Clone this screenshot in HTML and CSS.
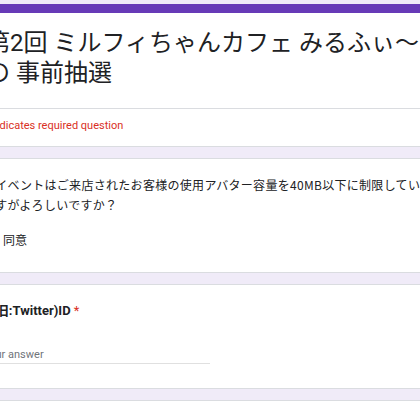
FILE: index.html
```html
<!DOCTYPE html>
<html lang="ja">
<head>
<meta charset="utf-8">
<title>第2回 ミルフィちゃんカフェ みるふぃ～の 事前抽選</title>
<link rel="stylesheet" href="styles.css">
</head>
<body>
<div class="page">
  <div class="form">
    <section class="card header">
      <div class="title-block">
        <h1 class="title">第2回 ミルフィちゃんカフェ みるふぃ～<br>の 事前抽選</h1>
      </div>
      <div class="required">* Indicates required question</div>
    </section>
    <section class="card question">
      <div class="q-text">本イベントはご来店されたお客様の使用アバター容量を40MB以下に制限してい<br>ますがよろしいですか？</div>
      <div class="option"><span class="checkbox"></span><span class="opt-label">同意</span></div>
    </section>
    <section class="card question">
      <div class="q-title">X(旧:Twitter)ID <span class="req">*</span></div>
      <div class="answer">Your answer</div>
    </section>
    <section class="card question empty"></section>
  </div>
</div>
</body>
</html>
```
FILE: styles.css
```css
html, body {
  margin: 0;
  padding: 0;
  overflow: hidden;
  background: #f0ebf8;
}
.page {
  height: 420px;
  padding-top: 4px;
  box-sizing: border-box;
  font-family: Roboto, "Noto Sans CJK JP", sans-serif;
  color: #202124;
}
.form {
  margin-left: -42px;
  width: 540px;
  display: flex;
  flex-direction: column;
  gap: 11px;
}
.card {
  background: #fff;
  border: 1px solid #dadce0;
  border-radius: 8px;
  padding: 0 24px;
}
.header {
  border-top: 9px solid #673ab7;
  padding: 0;
}
.title-block {
  padding: 15px 24px 20px 27px;
  border-bottom: 1px solid #dadce0;
}
.title {
  margin: 0;
  font-family: Roboto, "Noto Sans CJK JP", sans-serif;
  font-size: 24px;
  line-height: 30px;
  font-weight: 400;
  white-space: nowrap;
}
.required {
  padding: 9px 24px 12px;
  font-size: 11px;
  line-height: 16px;
  color: #d93025;
}
.q-text {
  padding-top: 16px;
  font-family: "Noto Sans CJK JP", sans-serif;
  font-size: 12px;
  line-height: 20px;
  letter-spacing: 0.3px;
  white-space: nowrap;
}
.option {
  margin-top: 15px;
  display: flex;
  align-items: center;
  height: 20px;
  padding-bottom: 22px;
}
.checkbox {
  width: 14px;
  height: 14px;
  border: 2px solid #5f6368;
  border-radius: 2px;
  box-sizing: border-box;
  margin-right: 8px;
  margin-left: -2px;
}
.opt-label {
  font-family: "Noto Sans CJK JP", sans-serif;
  font-size: 12px;
  line-height: 20px;
}
.q-title {
  padding-top: 16px;
  font-family: Roboto, "Noto Sans CJK JP", sans-serif;
  font-size: 13px;
  font-weight: 700;
  line-height: 20px;
}
.req {
  color: #d93025;
  font-weight: 400;
}
.answer {
  margin-top: 26px;
  width: 227px;
  font-size: 11px;
  line-height: 16px;
  color: #70757a;
  border-bottom: 1px solid #e0e0e0;
  margin-bottom: 24px;
}
.empty {
  height: 100px;
}
```
